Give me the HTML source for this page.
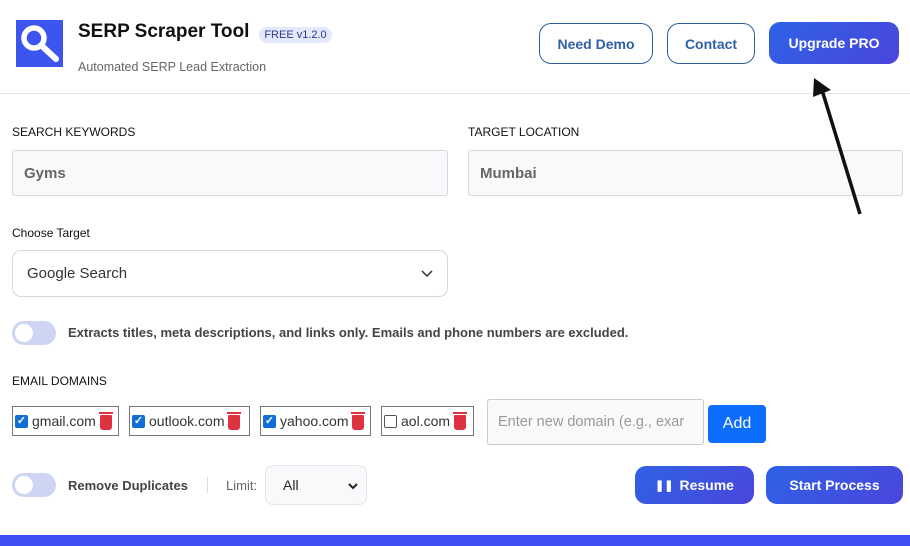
<!DOCTYPE html>
<html><head><meta charset="utf-8"><style>
*{box-sizing:border-box;margin:0;padding:0}
body{width:910px;height:546px;overflow:hidden;background:#fff;font-family:"Liberation Sans",sans-serif;position:relative;color:#222}
.a{position:absolute}
.lbl{font-size:12px;color:#111}
.inp{background:#f8f9fa;border:1px solid #d5d7da;border-radius:3px;font-size:15px;color:#666;font-weight:bold;padding-left:11px;display:flex;align-items:center}
.ob{border:1.5px solid #2e5d9e;border-radius:12px;color:#2f5fa5;font-weight:bold;font-size:14px;display:flex;align-items:center;justify-content:center}
.gb{background:linear-gradient(135deg,#2e62e6,#4b45dc);color:#fff;font-weight:bold;font-size:14px;border-radius:11px;display:flex;align-items:center;justify-content:center}
.tog{width:44px;height:24px;border-radius:12px;background:#cdd5f3}
.tog::after{content:"";position:absolute;left:3px;top:3px;width:18px;height:18px;border-radius:50%;background:#fff}
.dom{border:1px solid #777;height:30px;top:406px;display:flex;align-items:center;padding-left:2px;font-size:14px;color:#333;gap:4px}
.cb{width:13px;height:13px;border-radius:2px;background:#0f6fd6;color:#fff;font-size:11px;line-height:13px;text-align:center;font-weight:bold}
.cb.u{background:#fff;border:1px solid #555}
.tr{width:12px;height:15px;background:#dd3340;border-radius:1px 1px 3px 3px;position:relative;margin-top:2px}
.tr::before{content:"";position:absolute;left:-1px;top:-3px;width:14px;height:2px;background:#dd3340}
</style></head><body>
<div class="a" style="left:16px;top:20px;width:47px;height:47px;background:#3c55ef">
<svg width="47" height="47"><circle cx="18" cy="18" r="10" fill="none" stroke="#fff" stroke-width="5.5"/><line x1="26" y1="26" x2="40" y2="39" stroke="#fff" stroke-width="6" stroke-linecap="round"/></svg></div>
<div class="a" style="left:78px;top:21px;font-size:19px;font-weight:bold;color:#111">SERP Scraper Tool</div>
<div class="a" style="left:259px;top:27px;width:73px;height:16px;border-radius:8px;background:#e4e8fb;color:#2d3a8a;font-size:11px;text-align:center;line-height:16px">FREE v1.2.0</div>
<div class="a" style="left:78px;top:60px;font-size:12.5px;color:#666">Automated SERP Lead Extraction</div>
<div class="a ob" style="left:539px;top:23px;width:114px;height:41px">Need Demo</div>
<div class="a ob" style="left:667px;top:23px;width:88px;height:41px">Contact</div>
<div class="a gb" style="left:769px;top:22px;width:130px;height:42px">Upgrade PRO</div>
<div class="a" style="left:0;top:93px;width:910px;height:1px;background:#e3e3e3"></div>
<div class="a lbl" style="left:12px;top:125px">SEARCH KEYWORDS</div>
<div class="a lbl" style="left:468px;top:125px">TARGET LOCATION</div>
<div class="a inp" style="left:12px;top:150px;width:436px;height:46px">Gyms</div>
<div class="a inp" style="left:468px;top:150px;width:435px;height:46px">Mumbai</div>
<div class="a lbl" style="left:12px;top:226px">Choose Target</div>
<div class="a" style="left:12px;top:250px;width:436px;height:47px;border:1px solid #d5d7da;border-radius:9px;font-size:15px;color:#333;padding-left:14px;display:flex;align-items:center">Google Search
<svg class="a" style="right:14px;top:19px" width="12" height="8"><path d="M1 1l5 5 5-5" fill="none" stroke="#333" stroke-width="1.5"/></svg></div>
<div class="a tog" style="left:12px;top:321px"></div>
<div class="a" style="left:68px;top:325px;font-size:13px;font-weight:bold;color:#444">Extracts titles, meta descriptions, and links only. Emails and phone numbers are excluded.</div>
<div class="a lbl" style="left:12px;top:374px">EMAIL DOMAINS</div>
<div class="a dom" style="left:12px;width:107px"><div class="cb">✓</div>gmail.com<div class="tr"></div></div>
<div class="a dom" style="left:129px;width:121px"><div class="cb">✓</div>outlook.com<div class="tr"></div></div>
<div class="a dom" style="left:260px;width:111px"><div class="cb">✓</div>yahoo.com<div class="tr"></div></div>
<div class="a dom" style="left:381px;width:93px"><div class="cb u"></div>aol.com<div class="tr"></div></div>
<div class="a" style="left:487px;top:399px;width:217px;height:46px;border:1px solid #ccc;border-radius:3px;background:#f8f9fa;font-size:14.5px;color:#999;padding-left:10px;display:flex;align-items:center;overflow:hidden;white-space:nowrap">Enter new domain (e.g., exar</div>
<div class="a" style="left:708px;top:405px;width:58px;height:38px;background:#0d6efd;border-radius:4px;color:#fff;font-size:16px;display:flex;align-items:center;justify-content:center">Add</div>
<div class="a tog" style="left:12px;top:473px"></div>
<div class="a" style="left:68px;top:478px;font-size:13px;font-weight:bold;color:#444">Remove Duplicates</div>
<div class="a" style="left:207px;top:477px;width:1px;height:16px;background:#ddd"></div>
<div class="a" style="left:226px;top:478px;font-size:13px;color:#666">Limit:</div>
<div class="a" style="left:265px;top:465px;width:102px;height:40px;border:1px solid #e3e6ea;border-radius:8px;background:#f8f9fb;font-size:14px;color:#222;padding-left:17px;display:flex;align-items:center">All
<svg class="a" style="right:8px;top:17px" width="10" height="7"><path d="M1 1l4 4 4-4" fill="none" stroke="#222" stroke-width="2"/></svg></div>
<div class="a gb" style="left:635px;top:466px;width:119px;height:38px"><span style="font-size:11px;margin-right:6px">❚❚</span>Resume</div>
<div class="a gb" style="left:766px;top:466px;width:137px;height:38px">Start Process</div>
<div class="a" style="left:0;top:535px;width:910px;height:11px;background:#3d4ef5"></div>
<svg class="a" style="left:800px;top:70px" width="80" height="150"><line x1="60" y1="144" x2="22" y2="20" stroke="#111" stroke-width="3.5"/><polygon points="14,8 31,20 13,27" fill="#111"/></svg>
</body></html>
